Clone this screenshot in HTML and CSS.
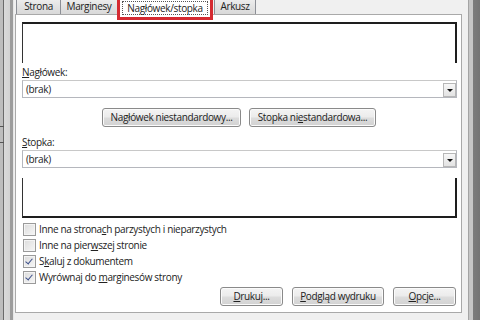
FILE: index.html
```html
<!DOCTYPE html>
<html lang="pl">
<head>
<meta charset="utf-8">
<link rel="stylesheet" href="styles.css">
</head>
<body>
<div class="screen">
  <div class="left-edge">
    <span class="tick tick1"></span>
    <span class="tick tick2"></span>
  </div>
  <div class="dialog">
    <div class="tabs">
      <div class="tab t-strona">Strona</div>
      <div class="tab t-marg">Marginesy</div>
      <div class="tab active"><span class="focus">Nagłówek/stopka</span></div>
      <div class="tab t-ark">Arkusz</div>
    </div>
    <div class="panel">
      <div class="preview preview-top"></div>
      <div class="label"><u>N</u>agłówek:</div>
      <div class="select"><span>(brak)</span><span class="arrow"></span></div>
      <div class="mid-buttons">
        <button class="btn btn-head">Na<u>g</u>łówek niestandardowy...</button>
        <button class="btn btn-foot">Stopka ni<u>e</u>standardowa...</button>
      </div>
      <div class="label label-foot"><u>S</u>topka:</div>
      <div class="select"><span>(brak)</span><span class="arrow"></span></div>
      <div class="preview preview-bottom"></div>
      <div class="checks">
        <label class="check"><span class="box"></span><span class="txt">Inne na strona<u>c</u>h parzystych i nieparzystych</span></label>
        <label class="check"><span class="box"></span><span class="txt">Inne na pier<u>w</u>szej stronie</span></label>
        <label class="check"><span class="box on"></span><span class="txt">S<u>k</u>aluj z dokumentem</span></label>
        <label class="check"><span class="box on"></span><span class="txt">Wyrównaj do <u>m</u>arginesów strony</span></label>
      </div>
      <div class="bottom-buttons">
        <button class="btn b-druk"><u>D</u>rukuj...</button>
        <button class="btn b-podg"><u>P</u>odgląd wydruku</button>
        <button class="btn b-opcje"><u>O</u>pcje...</button>
      </div>
    </div>
  </div>
  <div class="right-edge"></div>
</div>
</body>
</html>
```

FILE: styles.css
```css
html, body {
  margin: 0;
  padding: 0;
  width: 480px;
  height: 320px;
  overflow: hidden;
  background: #f0f0f0;
}
body {
  font-family: "Open Sans", "Noto Sans", sans-serif;
  font-size: 10px;
  letter-spacing: -0.35px;
  color: #222;
}
u { text-decoration: underline; text-underline-offset: 1px; }

.screen {
  display: flex;
  width: 480px;
  height: 320px;
}

.left-edge {
  width: 14px;
  position: relative;
  background: linear-gradient(to right,
    #bdbdbd 0, #bdbdbd 3px,
    #6a6a6a 3px, #6a6a6a 4px,
    #dadada 4px, #d2d2d2 10px,
    #9c9c9c 10px, #9c9c9c 13px,
    #e6e6e6 13px, #e6e6e6 14px);
}
.tick {
  position: absolute;
  left: 0;
  width: 4px;
  height: 1px;
  background: #555;
}
.tick1 { top: 126px; }
.tick2 { top: 142px; }

.right-edge {
  width: 13px;
  background: linear-gradient(to right,
    #f0f0f0 0, #f0f0f0 1px,
    #a4a4a4 1px, #a4a4a4 2px,
    #c6c6c6 2px, #c6c6c6 6px,
    #7c7c7c 6px, #747474 13px);
}

.dialog {
  flex: 1;
  display: flex;
  flex-direction: column;
  padding: 0 5px 7px 1px;
  background: #f0f0f0;
}

.tabs {
  height: 14px;
  display: flex;
  align-items: flex-end;
  padding-left: 1px;
  position: relative;
  z-index: 2;
}
.tab {
  height: 18px;
  box-sizing: border-box;
  border: 1px solid #8c8f96;
  border-bottom: none;
  border-top: none;
  background: linear-gradient(#f2f2f2, #e2e2e2 60%, #d9d9d9);
  display: flex;
  align-items: flex-end;
  justify-content: center;
  padding-bottom: 1px;
  line-height: 14px;
  margin-right: -1px;
  white-space: nowrap;
}
.t-strona { width: 45px; }
.t-marg { width: 58px; }
.t-ark { width: 42px; margin-left: 2px; }
.tab.active {
  width: 96px;
  height: 21px;
  margin-bottom: -6px;
  background: #fff;
  border: 3px solid #d52a31;
  border-top: none;
  padding-bottom: 3px;
  align-items: center;
  padding-top: 2px;
  position: relative;
  z-index: 3;
}
.focus {
  border: 1px dotted #555;
  padding: 0 4px;
  line-height: 12px;
}

.panel {
  flex: 1;
  border: 1px solid #a9a9a9;
  background: #fff;
  padding: 7px 4px 0 6px;
  display: flex;
  flex-direction: column;
}

.preview {
  height: 41px;
  box-sizing: border-box;
  border-left: 1px solid #333;
  border-right: 2px solid #1e1e1e;
}
.preview-top {
  border-top: 2px solid #1e1e1e;
}
.preview-bottom {
  height: 40px;
  margin-top: 10px;
  border-bottom: 2px solid #1e1e1e;
}

.label {
  height: 17px;
  line-height: 15px;
  padding-top: 2px;
  box-sizing: border-box;
}
.label-foot { margin-top: 7px; height: 16px; padding-top: 1px; }

.select {
  height: 18px;
  box-sizing: border-box;
  border: 1px solid #b5b7bd;
  border-top-color: #c8c8c8;
  display: flex;
  align-items: center;
  justify-content: space-between;
  padding-left: 3px;
}
.arrow {
  width: 13px;
  height: 14px;
  box-sizing: border-box;
  margin-top: 2px;
  border: 1px solid #b7b7b7;
  background: linear-gradient(#f7f7f7, #e3e3e3);
  position: relative;
}
.arrow::after {
  content: "";
  position: absolute;
  left: 3px;
  top: 5px;
  border-left: 3px solid transparent;
  border-right: 3px solid transparent;
  border-top: 3px solid #111;
}

.btn {
  font: inherit;
  letter-spacing: inherit;
  color: #222;
  height: 19px;
  box-sizing: border-box;
  border: 1px solid #8a8a8a;
  border-radius: 3px;
  background: linear-gradient(#f4f4f4 0, #ececec 45%, #dcdcdc 55%, #d2d2d2 100%);
  box-shadow: inset 0 0 0 1px #fbfbfb;
  padding: 0;
  line-height: 15px;
  text-align: center;
  white-space: nowrap;
}
.mid-buttons {
  display: flex;
  margin-top: 10px;
  padding-left: 80px;
  gap: 8px;
}
.btn-head { width: 139px; }
.btn-foot { width: 127px; }

.checks {
  display: flex;
  flex-direction: column;
  margin-top: 3px;
}
.check {
  height: 16px;
  display: flex;
  align-items: center;
  line-height: 16px;
}
.txt { white-space: nowrap; }
.box {
  width: 11px;
  height: 11px;
  border: 1px solid #9a9a9a;
  background: linear-gradient(135deg, #dcdcdc, #f6f6f6);
  box-shadow: inset 0 0 0 1px #f4f4f4;
  margin-left: 1px;
  margin-right: 3px;
  position: relative;
}
.box.on::after {
  content: "";
  position: absolute;
  left: 3px;
  top: 1px;
  width: 3px;
  height: 6px;
  border-right: 1.5px solid #3c4f8a;
  border-bottom: 1.5px solid #3c4f8a;
  transform: rotate(40deg);
}

.bottom-buttons {
  display: flex;
  justify-content: flex-end;
  margin-top: 2px;
  padding-right: 1px;
  gap: 9px;
}
.b-druk { width: 63px; }
.b-podg { width: 92px; }
.b-opcje { width: 63px; }
```
